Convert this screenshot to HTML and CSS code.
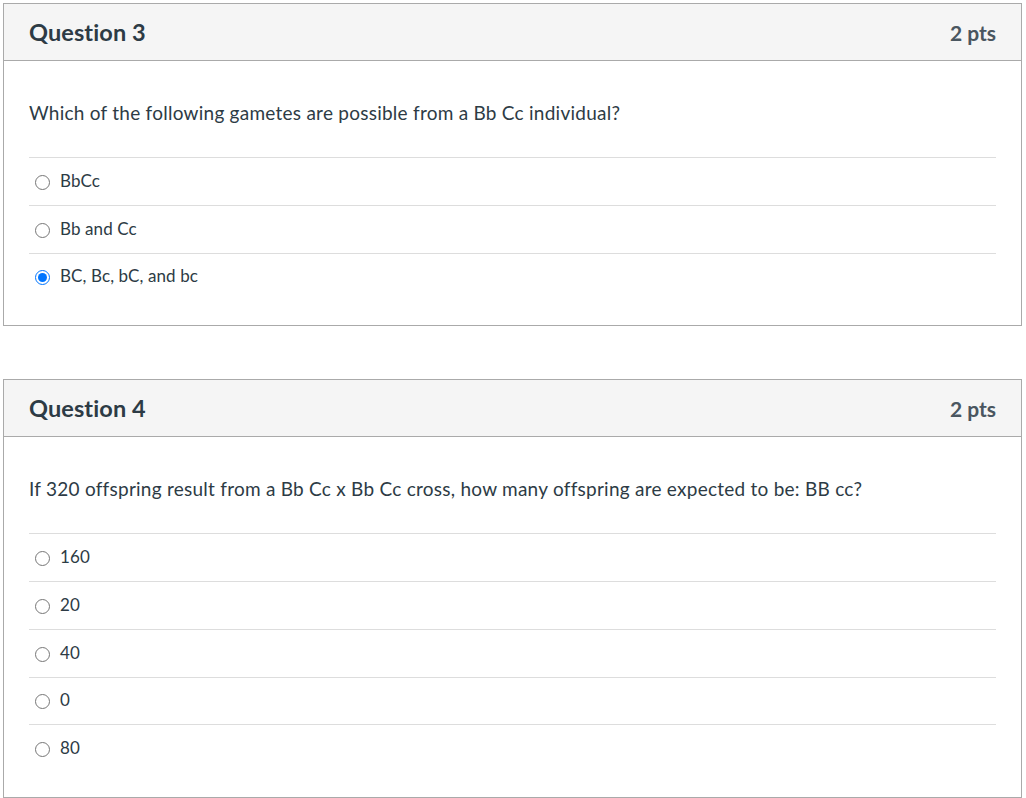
FILE: index.html
```html
<!DOCTYPE html>
<html>
<head>
<meta charset="utf-8">
<link rel="stylesheet" href="styles.css">
</head>
<body>
<div class="quiz">
  <section class="card">
    <header class="card-head">
      <h2 class="q-title">Question 3</h2>
      <span class="q-pts">2 pts</span>
    </header>
    <div class="card-body">
      <p class="q-text">Which of the following gametes are possible from a Bb Cc individual?</p>
      <div class="answers">
        <label class="answer"><input type="radio" name="q3"><span class="a-text">BbCc</span></label>
        <label class="answer"><input type="radio" name="q3"><span class="a-text">Bb and Cc</span></label>
        <label class="answer"><input type="radio" name="q3" checked><span class="a-text">BC, Bc, bC, and bc</span></label>
      </div>
    </div>
  </section>
  <section class="card">
    <header class="card-head">
      <h2 class="q-title">Question 4</h2>
      <span class="q-pts">2 pts</span>
    </header>
    <div class="card-body">
      <p class="q-text">If 320 offspring result from a Bb Cc x Bb Cc cross, how many offspring are expected to be: BB cc?</p>
      <div class="answers">
        <label class="answer"><input type="radio" name="q4"><span class="a-text">160</span></label>
        <label class="answer"><input type="radio" name="q4"><span class="a-text">20</span></label>
        <label class="answer"><input type="radio" name="q4"><span class="a-text">40</span></label>
        <label class="answer"><input type="radio" name="q4"><span class="a-text">0</span></label>
        <label class="answer"><input type="radio" name="q4"><span class="a-text">80</span></label>
      </div>
    </div>
  </section>
</div>
</body>
</html>
```
FILE: styles.css
```css
html, body {
  margin: 0;
  padding: 0;
  background: #ffffff;
}
body {
  font-family: Lato, "Noto Sans", sans-serif;
  color: #2d3b45;
}
.quiz {
  padding: 3px 4px 0 3px;
  display: flex;
  flex-direction: column;
  gap: 53px;
}
.card {
  border: 1px solid #aaaaaa;
  width: 1017px;
}
.card-head {
  height: 56px;
  background: #f5f5f5;
  border-bottom: 1px solid #aaaaaa;
  display: flex;
  align-items: center;
  justify-content: space-between;
  padding: 0 25px;
}
.q-title {
  margin: 0;
  font-size: 23.5px;
  font-weight: 700;
  color: #2d3b45;
  letter-spacing: 0.1px;
}
.q-pts {
  font-size: 21px;
  font-weight: 700;
  color: #4a5660;
}
.card-body {
  padding: 38px 25px 25px;
}
.q-text {
  margin: 0 0 30px;
  font-size: 19px;
  letter-spacing: 0.25px;
  line-height: 28px;
}
.answer {
  display: flex;
  align-items: center;
  height: 46.75px;
  border-top: 1px solid #dddddd;
  font-size: 17px;
}
.answer input {
  margin: 0 10px 0 6px;
  width: 15px;
  height: 15px;
  position: relative;
  top: 1px;
}
.a-text {
  position: relative;
  top: -1px;
  letter-spacing: 0.1px;
}
```
